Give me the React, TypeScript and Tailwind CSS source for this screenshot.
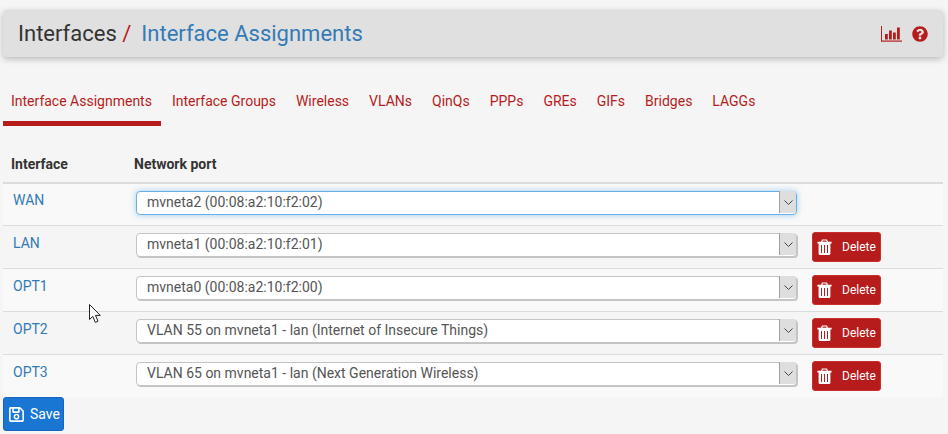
import React from "react";
import { FaQuestionCircle, FaRegSave } from "react-icons/fa";

const tabs = ["Interface Assignments", "Interface Groups", "Wireless", "VLANs", "QinQs", "PPPs", "GREs", "GIFs", "Bridges", "LAGGs"];
const rows = [
  { name: "WAN", port: "mvneta2 (00:08:a2:10:f2:02)", focus: true, del: false },
  { name: "LAN", port: "mvneta1 (00:08:a2:10:f2:01)", focus: false, del: true },
  { name: "OPT1", port: "mvneta0 (00:08:a2:10:f2:00)", focus: false, del: true },
  { name: "OPT2", port: "VLAN 55 on mvneta1 - lan (Internet of Insecure Things)", focus: false, del: true },
  { name: "OPT3", port: "VLAN 65 on mvneta1 - lan (Next Generation Wireless)", focus: false, del: true },
];

function Chart() {
  return (
    <svg width="21" height="16" viewBox="0 0 21 16" className="text-[#b71c1c]" fill="currentColor">
      <rect x="0" y="0" width="1" height="15.5" />
      <rect x="0" y="14.5" width="21" height="1.2" />
      <rect x="4" y="8" width="2.8" height="5.5" />
      <rect x="8" y="4.5" width="2.8" height="9" />
      <rect x="12" y="6.5" width="2.8" height="7" />
      <rect x="16" y="1.5" width="2.8" height="12" />
    </svg>
  );
}

function Trash() {
  return (
    <svg width="15" height="16" viewBox="0 0 15 16" fill="#fff">
      <path
        fillRule="evenodd"
        d="M5 0.5 H10 L11 2.8 H14.6 V4.6 H13.4 V14.4 Q13.4 16 12 16 H3 Q1.6 16 1.6 14.4 V4.6 H0.4 V2.8 H4 Z M5.8 1.6 L5.4 2.8 H9.6 L9.2 1.6 Z M4 6 V14 H5 V6 Z M7 6 V14 H8 V6 Z M10 6 V14 H11 V6 Z"
      />
    </svg>
  );
}

function Row({ r, i }: { r: (typeof rows)[number]; i: number }) {
  return (
    <div
      className={`flex border-b border-[#dcdcdc] last:h-[42px] last:border-b-0 ${i === 0 ? "h-[42px]" : "h-[43px]"} ${
        i % 2 === 0 ? "bg-[#f9f9f9]" : "bg-[#f5f5f5]"
      }`}
    >
      <a className={`w-[133px] pl-[10px] text-[14px] leading-[20px] text-[#337ab7] ${i === 0 ? "pt-[6px]" : "pt-[7px]"}`}>{r.name}</a>
      <div className="relative mt-[6px] h-[24px] w-[661px]">
        <select
          defaultValue={r.port}
          className={`h-full w-full appearance-none rounded-[4px] border bg-white pl-[10px] text-[14px] text-[#555] outline-none ${
            r.focus
              ? "border-[#66afe9] shadow-[0_0_6px_rgba(102,175,233,0.6)]"
              : "border-[#c4c4c4] shadow-[1px_1px_0_#c4c4c4]"
          }`}
        >
          <option>{r.port}</option>
        </select>
        <span className="pointer-events-none absolute top-[1px] right-[1px] bottom-[1px] flex w-[17px] items-center justify-center rounded-r-[3px] border-l border-[#a0a0a0] bg-[#dedede]">
          <svg width="9" height="5" viewBox="0 0 9 5" fill="none" stroke="#444" strokeWidth="1">
            <path d="M0.5 0.5 L4.5 4.5 L8.5 0.5" />
          </svg>
        </span>
      </div>
      {r.del && (
        <button className="mt-[6px] ml-[15px] flex h-[30px] w-[69px] items-center rounded-[3px] border border-[#c9302c] bg-[#b71c1c] pl-[4px] text-[12px] text-white">
          <Trash />
          <span className="ml-[10px]">Delete</span>
        </button>
      )}
    </div>
  );
}

export default function App() {
  return (
    <div className="relative h-[434px] w-[948px] overflow-hidden bg-[#f5f5f5] font-['Roboto',sans-serif]">
      <div className="px-[3px] pt-[10px] pr-[5px]">
        <header className="flex h-[47px] items-center justify-between rounded-[4px] bg-[#e0e0e0] pr-[15px] pl-[15px] shadow-[0_2px_6px_rgba(0,0,0,0.25)]">
          <h1 className="text-[22px] leading-none text-[#333]">
            Interfaces <span className="text-[#b71c1c]">/</span>
            <span className="ml-[10px] text-[#337ab7]">Interface Assignments</span>
          </h1>
          <div className="flex items-center gap-[10px] text-[#b71c1c]">
            <Chart />
            <FaQuestionCircle className="h-[16px] w-[16px]" />
          </div>
        </header>

        <nav className="mt-[22px] flex h-[47px] gap-[4px]">
          {tabs.map((t, i) => (
            <a
              key={t}
              className={`h-[47px] pt-[12px] text-[14px] leading-[20px] text-[#b71c1c] ${
                i === 0 ? "-mr-[1px] border-b-[5px] border-[#b71c1c] pr-[9px] pl-[8px]" : "px-[8px]"
              }`}
            >
              {t}
            </a>
          ))}
        </nav>

        <div className="mt-[21px] flex h-[37px] items-end border-b-2 border-[#dcdcdc] pb-[8px] text-[14px] leading-[20px] font-bold text-[#333]">
          <div className="w-[131px] pl-[8px]">Interface</div>
          <div>Network port</div>
        </div>
        <div>
          {rows.map((r, i) => (
            <Row key={r.name} r={r} i={i} />
          ))}
        </div>
        <button className="flex h-[34px] w-[61px] items-center gap-[5px] rounded-[3px] border border-[#1565c0] bg-[#1976d2] pl-[4px] text-[14px] text-white">
          <FaRegSave className="h-[17px] w-[17px]" />
          Save
        </button>
      </div>
      <svg className="absolute top-[304px] left-[89px]" width="13" height="20" viewBox="0 0 13 20">
        <path d="M0.5 0.5 V15.5 L3.8 12.4 L6.3 18.4 L9 17.2 L6.5 11.4 H11.3 Z" fill="#fff" stroke="#222" strokeWidth="1" />
      </svg>
    </div>
  );
}
